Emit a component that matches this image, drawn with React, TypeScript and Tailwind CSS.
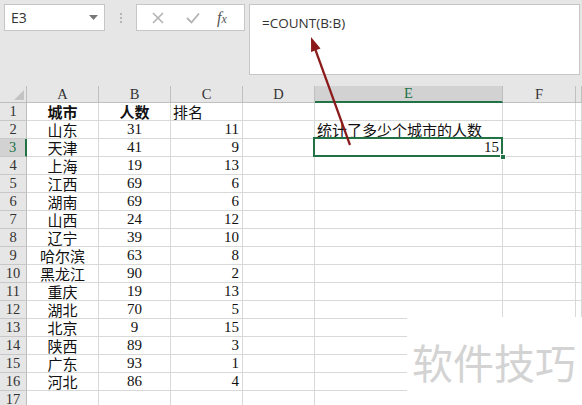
import React from "react";

const rows: [string, string, string][] = [
  ["山东", "31", "11"],
  ["天津", "41", "9"],
  ["上海", "19", "13"],
  ["江西", "69", "6"],
  ["湖南", "69", "6"],
  ["山西", "24", "12"],
  ["辽宁", "39", "10"],
  ["哈尔滨", "63", "8"],
  ["黑龙江", "90", "2"],
  ["重庆", "19", "13"],
  ["湖北", "70", "5"],
  ["北京", "9", "15"],
  ["陕西", "89", "3"],
  ["广东", "93", "1"],
  ["河北", "86", "4"],
];

const cjk = "font-['Noto_Sans_CJK_SC',sans-serif] text-[15px]";
const num = "font-['Liberation_Serif','Noto_Sans_CJK_SC',serif] text-[15px]";
const hdr = "font-['Liberation_Serif','Noto_Sans_CJK_SC',serif] text-[14.5px] text-[#333]";

function Cell({ children, className = "" }: { children?: React.ReactNode; className?: string }) {
  return (
    <div className={`h-[18px] border-r border-b border-[#d9d9d9] bg-white flex items-center overflow-visible whitespace-nowrap leading-[17px] text-[#111] ${className}`}>
      {children}
    </div>
  );
}

function RowHead({ n, active = false }: { n: number; active?: boolean }) {
  return (
    <div
      className={`h-[18px] border-b border-[#c8c8c8] flex items-center justify-center leading-[17px] ${hdr} ${
        active ? "bg-[#d2d2d2] border-r-2 border-r-[#217346] text-[#217346]" : "bg-[#e6e6e6] border-r border-r-[#bdbdbd]"
      }`}
    >
      {n}
    </div>
  );
}

export default function App() {
  const colHeads = ["A", "B", "C", "D", "E", "F", ""];
  return (
    <div className="relative w-[582px] h-[405px] overflow-hidden bg-[#e6e6e6] select-none">
      {/* toolbar */}
      <div className="h-[86px] flex items-start pt-[4px] pl-[4px]">
        <div className="w-[101px] h-[27px] bg-white border border-[#c6c6c6] flex items-center justify-between pl-[6px] pr-[6px]">
          <span className="font-['Open_Sans',sans-serif] text-[14px] text-[#333]">E3</span>
          <svg width="9" height="5" viewBox="0 0 9 5">
            <path d="M0 0 L9 0 L4.5 5 Z" fill="#777" />
          </svg>
        </div>
        <div className="w-[31px] h-[27px] flex flex-col items-center justify-center gap-[2px]">
          <div className="w-[2px] h-[2px] bg-[#b5b5b5]" />
          <div className="w-[2px] h-[2px] bg-[#b5b5b5]" />
          <div className="w-[2px] h-[2px] bg-[#b5b5b5]" />
        </div>
        <div className="w-[109px] h-[27px] bg-white border border-[#c6c6c6] flex items-center pl-[10px] gap-[13px]">
          <svg width="22" height="14" viewBox="0 0 22 14">
            <path d="M6 2 L16 12 M16 2 L6 12" stroke="#b3b3b3" strokeWidth="1.6" />
          </svg>
          <svg width="22" height="14" viewBox="0 0 22 14">
            <path d="M5 7 L9.5 11.5 L17 2.5" stroke="#b3b3b3" strokeWidth="1.8" fill="none" />
          </svg>
          <span className="font-['Liberation_Serif',serif] italic text-[16px] text-[#555] leading-none">
            f<span className="text-[12px]">x</span>
          </span>
        </div>
        <div className="ml-[4px] w-[331px] h-[71px] bg-white border border-[#c6c6c6] pl-[12px] pt-[5px]">
          <span className="font-['Open_Sans',sans-serif] text-[13.5px] text-[#333]">=COUNT(B:B)</span>
        </div>
      </div>

      {/* grid */}
      <div className="grid grid-cols-[27px_72px_72px_72px_72px_188px_73px_1fr]">
        {/* header row */}
        <div className="h-[17px] bg-[#e6e6e6] border-r border-b border-[#bdbdbd] relative">
          <svg className="absolute right-[2px] bottom-[2px]" width="10" height="10" viewBox="0 0 10 10">
            <path d="M10 0 L10 10 L0 10 Z" fill="#c4c4c4" />
          </svg>
        </div>
        {colHeads.map((c, i) =>
          c === "E" ? (
            <div key={i} className={`h-[17px] bg-[#d2d2d2] border-r border-[#bdbdbd] border-b-2 border-b-[#217346] flex items-center justify-center text-[#217346] leading-none ${hdr}`}>
              {c}
            </div>
          ) : (
            <div key={i} className={`h-[17px] bg-[#e6e6e6] border-r border-b border-[#c0c0c0] flex items-center justify-center leading-none ${hdr}`}>
              {c}
            </div>
          )
        )}

        {/* row 1 */}
        <RowHead n={1} />
        <Cell className={`justify-center font-bold ${cjk}`}>城市</Cell>
        <Cell className={`justify-center font-bold ${cjk}`}>人数</Cell>
        <Cell className={`pl-[2px] ${cjk}`}>排名</Cell>
        <Cell />
        <Cell />
        <Cell />
        <Cell />

        {rows.map((r, idx) => {
          const n = idx + 2;
          return (
            <React.Fragment key={n}>
              <RowHead n={n} active={n === 3} />
              <Cell className={`justify-center ${cjk}`}>{r[0]}</Cell>
              <Cell className={`justify-center ${num}`}>{r[1]}</Cell>
              <Cell className={`justify-end pr-[3px] ${num}`}>{r[2]}</Cell>
              <Cell />
              {n === 2 ? (
                <Cell className={`pl-[2px] ${cjk}`}>统计了多少个城市的人数</Cell>
              ) : n === 3 ? (
                <Cell className={`relative justify-end pr-[3px] ${num}`}>
                  15
                  <div className="absolute left-[-2px] top-[-2px] right-[-1px] bottom-[-1px] border-2 border-[#217346]" />
                  <div className="absolute right-[-4px] bottom-[-4px] w-[6px] h-[6px] bg-[#217346] border border-white" />
                </Cell>
              ) : (
                <Cell />
              )}
              <Cell />
              <Cell />
            </React.Fragment>
          );
        })}
        <RowHead n={17} />
        <Cell />
        <Cell />
        <Cell />
        <Cell />
        <Cell />
        <Cell />
        <Cell />
      </div>

      {/* watermark */}
      <div className="absolute left-[407px] top-[317px] right-0 bottom-0 bg-white flex items-center pl-[5px]">
        <span className="font-['Noto_Sans_CJK_SC',sans-serif] text-[41px] text-[#d3d3d3] leading-none">软件技巧</span>
      </div>

      {/* arrow */}
      <svg className="absolute left-0 top-0 pointer-events-none" width="582" height="405" viewBox="0 0 582 405">
        <line x1="350" y1="145" x2="315.5" y2="50" stroke="#8b1a1a" strokeWidth="2.2" />
        <polygon points="311,37 320.5,48.5 311.1,52" fill="#8b1a1a" />
      </svg>
    </div>
  );
}
